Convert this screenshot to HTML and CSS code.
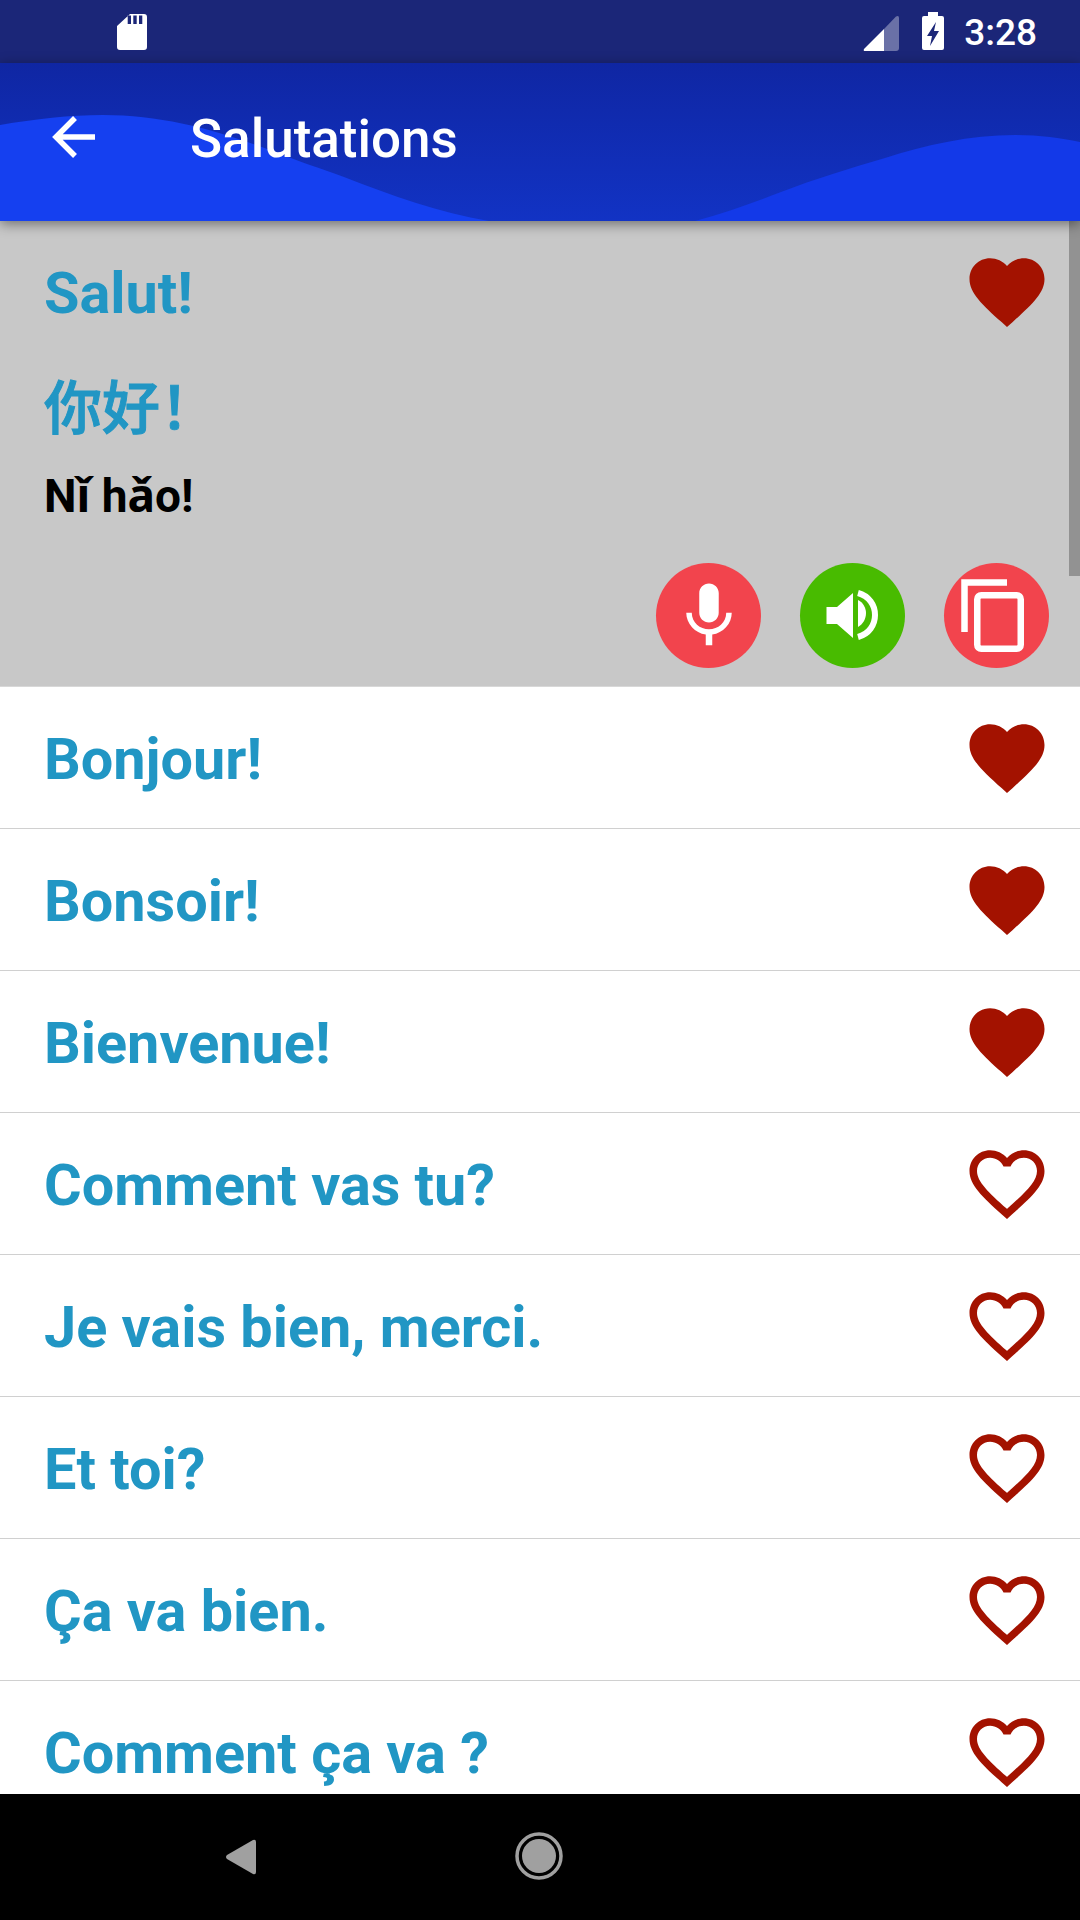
FILE: index.html
```html
<!DOCTYPE html>
<html lang="fr">
  <head>
    <meta charset="UTF-8" />
    <meta name="viewport" content="width=device-width, initial-scale=1.0" />
    <title>Salutations</title>
    <link rel="stylesheet" href="styles.css">
  </head>
  <body>
    <div class="app">
      <div class="status-bar">
        <svg class="sd-icon" width="30" height="36" viewBox="0 0 30 36">
          <path fill="#fff" fill-rule="evenodd" d="M13 0H27a3 3 0 0 1 3 3V33a3 3 0 0 1-3 3H3a3 3 0 0 1-3-3V12zM10.700 1.500V10H14V1.500zM16.300 1.500V10H19.700V1.500zM22 1.500V10H25.300V1.500z" />
        </svg>
        <div class="status-right">
          <svg class="signal-icon" width="36" height="36" viewBox="0 0 36 36">
            <path fill="#fff" fill-opacity="0.35" d="M21 14L33 1.500Q36 0 36 3V33a3 3 0 0 1-3 3H21z" />
            <path fill="#fff" d="M21 14V36H2Q0 36 1 34z" />
          </svg>
          <svg class="battery-icon" width="22" height="38" viewBox="0 0 22 38">
            <path fill="#fff" fill-rule="evenodd" d="M6 0H16V4H20a2 2 0 0 1 2 2V36a2 2 0 0 1-2 2H2a2 2 0 0 1-2-2V6a2 2 0 0 1 2-2H6zM14 10L5 24H10L8 34L17 19H12z" />
          </svg>
          <span class="clock">3:28</span>
        </div>
      </div>

      <div class="app-bar">
        <svg class="wave" width="1080" height="158" viewBox="0 0 1080 158">
          <path fill="#1540f0" d="M0 62C35 56 70 52 103 52C165 52 220 68 275 89C300 99 320 105 344 114C390 132 440 150 489 158H0z" />
          <path fill="#1339e8" d="M695 158C725 150 755 139 781 129C815 116 850 105 885 95C925 82 970 72 1015 72C1040 72 1060 75 1080 79V158z" />
        </svg>
        <svg class="back-icon" width="44" height="42" viewBox="0 0 44 42">
          <path fill="none" stroke="#fff" stroke-width="5.500" d="M43 21H4M23 2L4 21L23 40" />
        </svg>
        <span class="app-title">Salutations</span>
      </div>

      <div class="phrases">
        <div class="phrase-open">
          <div class="phrase-head">
            <span class="phrase-text">Salut!</span>
            <svg class="heart" viewBox="0 0 24 24"><path d="M12 21.35l-1.45-1.32C5.4 15.36 2 12.280 2 8.500 2 5.420 4.420 3 7.500 3c1.740 0 3.410.81 4.500 2.090C13.090 3.810 14.760 3 16.500 3 19.580 3 22 5.420 22 8.500c0 3.780-3.400 6.860-8.550 11.540L12 21.350z" /></svg>
          </div>
          <div class="chinese" lang="zh-CN">你好！</div>
          <div class="pinyin">Nǐ hǎo!</div>
          <div class="actions">
            <div class="round-btn red">
              <svg width="78" height="78" viewBox="0 0 24 24"><path fill="#fff" d="M12 14c1.660 0 2.990-1.340 2.990-3L15 5c0-1.660-1.340-3-3-3S9 3.340 9 5v6c0 1.660 1.340 3 3 3zm5.300-3c0 3-2.540 5.100-5.300 5.100S6.700 14 6.700 11H5c0 3.410 2.720 6.230 6 6.720V21h2v-3.280c3.280-.48 6-3.300 6-6.720h-1.700z" /></svg>
            </div>
            <div class="round-btn green">
              <svg width="105" height="105" viewBox="0 0 105 105">
                <path fill="#fff" d="M26.500 44H37L53 30V75L37 61H26.500z" />
                <path fill="#fff" d="M58 37C63 39 66 45 66 50C66 56 63 61 58 64z" />
                <path fill="none" stroke="#fff" stroke-width="6" d="M58 30C69 33 75 42 75 52C75 62 69 71 58 74" />
              </svg>
            </div>
            <div class="round-btn red">
              <svg width="105" height="105" viewBox="0 0 105 105">
                <path fill="none" stroke="#fff" stroke-width="6.500" d="M63 19.500H20.500V69" />
                <rect fill="none" stroke="#fff" stroke-width="6.500" x="33.250" y="32.250" width="43.500" height="53.500" rx="4" />
              </svg>
            </div>
          </div>
        </div>

        <div class="phrase-row">
          <span class="phrase-text">Bonjour!</span>
          <svg class="heart" viewBox="0 0 24 24"><path d="M12 21.35l-1.45-1.32C5.4 15.36 2 12.280 2 8.500 2 5.420 4.420 3 7.500 3c1.740 0 3.410.81 4.500 2.090C13.090 3.810 14.760 3 16.500 3 19.580 3 22 5.420 22 8.500c0 3.780-3.400 6.860-8.550 11.540L12 21.350z" /></svg>
        </div>
        <div class="phrase-row">
          <span class="phrase-text">Bonsoir!</span>
          <svg class="heart" viewBox="0 0 24 24"><path d="M12 21.35l-1.45-1.32C5.4 15.36 2 12.280 2 8.500 2 5.420 4.420 3 7.500 3c1.740 0 3.410.81 4.500 2.090C13.090 3.810 14.760 3 16.500 3 19.580 3 22 5.420 22 8.500c0 3.780-3.400 6.860-8.550 11.540L12 21.350z" /></svg>
        </div>
        <div class="phrase-row">
          <span class="phrase-text">Bienvenue!</span>
          <svg class="heart" viewBox="0 0 24 24"><path d="M12 21.35l-1.45-1.32C5.4 15.36 2 12.280 2 8.500 2 5.420 4.420 3 7.500 3c1.740 0 3.410.81 4.500 2.090C13.090 3.810 14.760 3 16.500 3 19.580 3 22 5.420 22 8.500c0 3.780-3.400 6.860-8.550 11.540L12 21.350z" /></svg>
        </div>
        <div class="phrase-row">
          <span class="phrase-text">Comment vas tu?</span>
          <svg class="heart" viewBox="0 0 24 24"><path d="M16.500 3c-1.740 0-3.410.81-4.500 2.090C10.910 3.810 9.240 3 7.500 3 4.420 3 2 5.420 2 8.500c0 3.780 3.400 6.860 8.550 11.540L12 21.350l1.450-1.320C18.600 15.360 22 12.28 22 8.500 22 5.420 19.580 3 16.500 3zm-4.400 15.550l-.1.1-.1-.1C7.140 14.240 4 11.390 4 8.500 4 6.500 5.500 5 7.500 5c1.540 0 3.040.99 3.570 2.360h1.870C13.460 5.990 14.960 5 16.500 5c2 0 3.500 1.500 3.500 3.500 0 2.890-3.140 5.740-7.900 10.050z" /></svg>
        </div>
        <div class="phrase-row">
          <span class="phrase-text">Je vais bien, merci.</span>
          <svg class="heart" viewBox="0 0 24 24"><path d="M16.500 3c-1.740 0-3.410.81-4.500 2.090C10.910 3.810 9.240 3 7.500 3 4.420 3 2 5.420 2 8.500c0 3.780 3.400 6.860 8.550 11.540L12 21.350l1.450-1.320C18.600 15.360 22 12.28 22 8.500 22 5.420 19.580 3 16.500 3zm-4.400 15.550l-.1.1-.1-.1C7.140 14.240 4 11.390 4 8.500 4 6.500 5.500 5 7.500 5c1.540 0 3.040.99 3.570 2.360h1.870C13.460 5.990 14.960 5 16.500 5c2 0 3.500 1.500 3.500 3.500 0 2.890-3.140 5.740-7.900 10.050z" /></svg>
        </div>
        <div class="phrase-row">
          <span class="phrase-text">Et toi?</span>
          <svg class="heart" viewBox="0 0 24 24"><path d="M16.500 3c-1.740 0-3.410.81-4.500 2.090C10.910 3.810 9.240 3 7.500 3 4.420 3 2 5.420 2 8.500c0 3.780 3.400 6.860 8.550 11.540L12 21.350l1.450-1.320C18.600 15.360 22 12.28 22 8.500 22 5.420 19.580 3 16.500 3zm-4.400 15.550l-.1.1-.1-.1C7.140 14.240 4 11.390 4 8.500 4 6.500 5.500 5 7.500 5c1.540 0 3.040.99 3.570 2.360h1.870C13.460 5.990 14.960 5 16.500 5c2 0 3.500 1.500 3.500 3.500 0 2.890-3.140 5.740-7.900 10.050z" /></svg>
        </div>
        <div class="phrase-row">
          <span class="phrase-text">Ça va bien.</span>
          <svg class="heart" viewBox="0 0 24 24"><path d="M16.500 3c-1.740 0-3.410.81-4.500 2.090C10.910 3.810 9.240 3 7.500 3 4.420 3 2 5.420 2 8.500c0 3.780 3.400 6.860 8.550 11.540L12 21.350l1.450-1.320C18.600 15.360 22 12.28 22 8.500 22 5.420 19.580 3 16.500 3zm-4.400 15.550l-.1.1-.1-.1C7.140 14.240 4 11.390 4 8.500 4 6.500 5.500 5 7.500 5c1.540 0 3.040.99 3.570 2.360h1.870C13.460 5.990 14.960 5 16.500 5c2 0 3.500 1.500 3.500 3.500 0 2.890-3.140 5.740-7.900 10.050z" /></svg>
        </div>
        <div class="phrase-row">
          <span class="phrase-text">Comment ça va ?</span>
          <svg class="heart" viewBox="0 0 24 24"><path d="M16.500 3c-1.740 0-3.410.81-4.500 2.090C10.910 3.810 9.240 3 7.500 3 4.420 3 2 5.420 2 8.500c0 3.780 3.400 6.860 8.550 11.540L12 21.350l1.450-1.320C18.600 15.360 22 12.28 22 8.500 22 5.420 19.580 3 16.500 3zm-4.400 15.550l-.1.1-.1-.1C7.140 14.240 4 11.390 4 8.500 4 6.500 5.500 5 7.500 5c1.540 0 3.040.99 3.570 2.360h1.870C13.460 5.990 14.960 5 16.500 5c2 0 3.500 1.500 3.500 3.500 0 2.890-3.140 5.740-7.900 10.050z" /></svg>
        </div>
        <div class="scroll-thumb"></div>
      </div>

      <div class="nav-bar">
        <svg class="nav-back" width="32" height="36" viewBox="0 0 32 36">
          <path fill="#a0a0a0" d="M28 1Q31 0 31 3V33Q31 36 28 35L2 20Q0 18 2 16z" />
        </svg>
        <svg class="nav-home" width="48" height="48" viewBox="0 0 48 48">
          <circle cx="24" cy="24" r="22" fill="none" stroke="#a0a0a0" stroke-width="3.500" />
          <circle cx="24" cy="24" r="17" fill="#a0a0a0" />
        </svg>
      </div>
    </div>
  </body>
</html>
```

FILE: styles.css
```css
body {
  margin: 0;
  padding: 0;
  font-family: Roboto, "Noto Sans", sans-serif;
}

.app {
  width: 1080px;
  height: 1920px;
  display: flex;
  flex-direction: column;
  overflow: hidden;
}

.status-bar {
  height: 63px;
  flex-shrink: 0;
  display: flex;
  align-items: flex-start;
  justify-content: space-between;
  padding: 14px 43px 0 117px;
  box-sizing: border-box;
  background-color: #1b2678;
}

.status-right {
  display: flex;
  align-items: flex-start;
  margin-top: -1px;
}

.signal-icon {
  margin: 2px 23px 0 0;
}

.battery-icon {
  margin: -1px 20px 0 0;
}

.clock {
  color: #fff;
  font-size: 37px;
  font-weight: 500;
  line-height: 38px;
  margin-top: 1px;
}

.app-bar {
  position: relative;
  z-index: 2;
  height: 158px;
  flex-shrink: 0;
  display: flex;
  align-items: center;
  padding: 0 0 10px 52px;
  box-sizing: border-box;
  background: linear-gradient(#0f26a3, #1233c4);
  box-shadow: 0 3px 12px rgba(0, 0, 0, 0.45);
}

.wave {
  position: absolute;
  left: 0;
  top: 0;
}

.back-icon {
  position: relative;
  margin-right: 94px;
}

.app-title {
  position: relative;
  color: #fff;
  font-size: 53px;
  font-weight: 500;
  margin-top: 4px;
}

.phrases {
  position: relative;
  flex: 1;
  min-height: 0;
  overflow: hidden;
  background-color: #fff;
}

.phrase-open {
  height: 466px;
  box-sizing: border-box;
  padding: 0 25px 0 44px;
  background-color: #c8c8c8;
  border-bottom: 1px solid #d8d8d8;
}

.phrase-head {
  height: 142px;
  display: flex;
  align-items: center;
  justify-content: space-between;
}

.phrase-row {
  height: 142px;
  box-sizing: border-box;
  display: flex;
  align-items: center;
  justify-content: space-between;
  padding: 0 28px 0 44px;
  border-bottom: 1px solid #d0d0d0;
}

.phrase-text {
  color: #2196c4;
  font-size: 57.6px;
  font-weight: 700;
  margin-top: 3px;
}

.heart {
  width: 90px;
  height: 90px;
  fill: #a31200;
}

.phrase-open .heart {
  margin-right: 3px;
}

.chinese {
  color: #2196c4;
  font-family: Roboto, "Noto Sans CJK SC", sans-serif;
  font-size: 58px;
  font-weight: 500;
  -webkit-text-stroke: 1px #2196c4;
  line-height: 70px;
  margin-top: 11px;
}

.pinyin {
  color: #000;
  font-size: 46px;
  font-weight: 700;
  line-height: 60px;
  margin-top: 22px;
}

.actions {
  display: flex;
  justify-content: flex-end;
  gap: 39px;
  margin: 37px 6px 0 0;
}

.round-btn {
  width: 105px;
  height: 105px;
  border-radius: 50%;
  display: flex;
  align-items: center;
  justify-content: center;
}

.red {
  background-color: #f2444d;
}

.green {
  background-color: #48bb00;
}

.scroll-thumb {
  position: absolute;
  right: 0;
  top: 0;
  width: 11px;
  height: 355px;
  background-color: #929292;
}

.nav-bar {
  height: 126px;
  flex-shrink: 0;
  position: relative;
  background-color: #000;
}

.nav-back {
  position: absolute;
  left: 225px;
  top: 45px;
}

.nav-home {
  position: absolute;
  left: 515px;
  top: 38px;
}
```
